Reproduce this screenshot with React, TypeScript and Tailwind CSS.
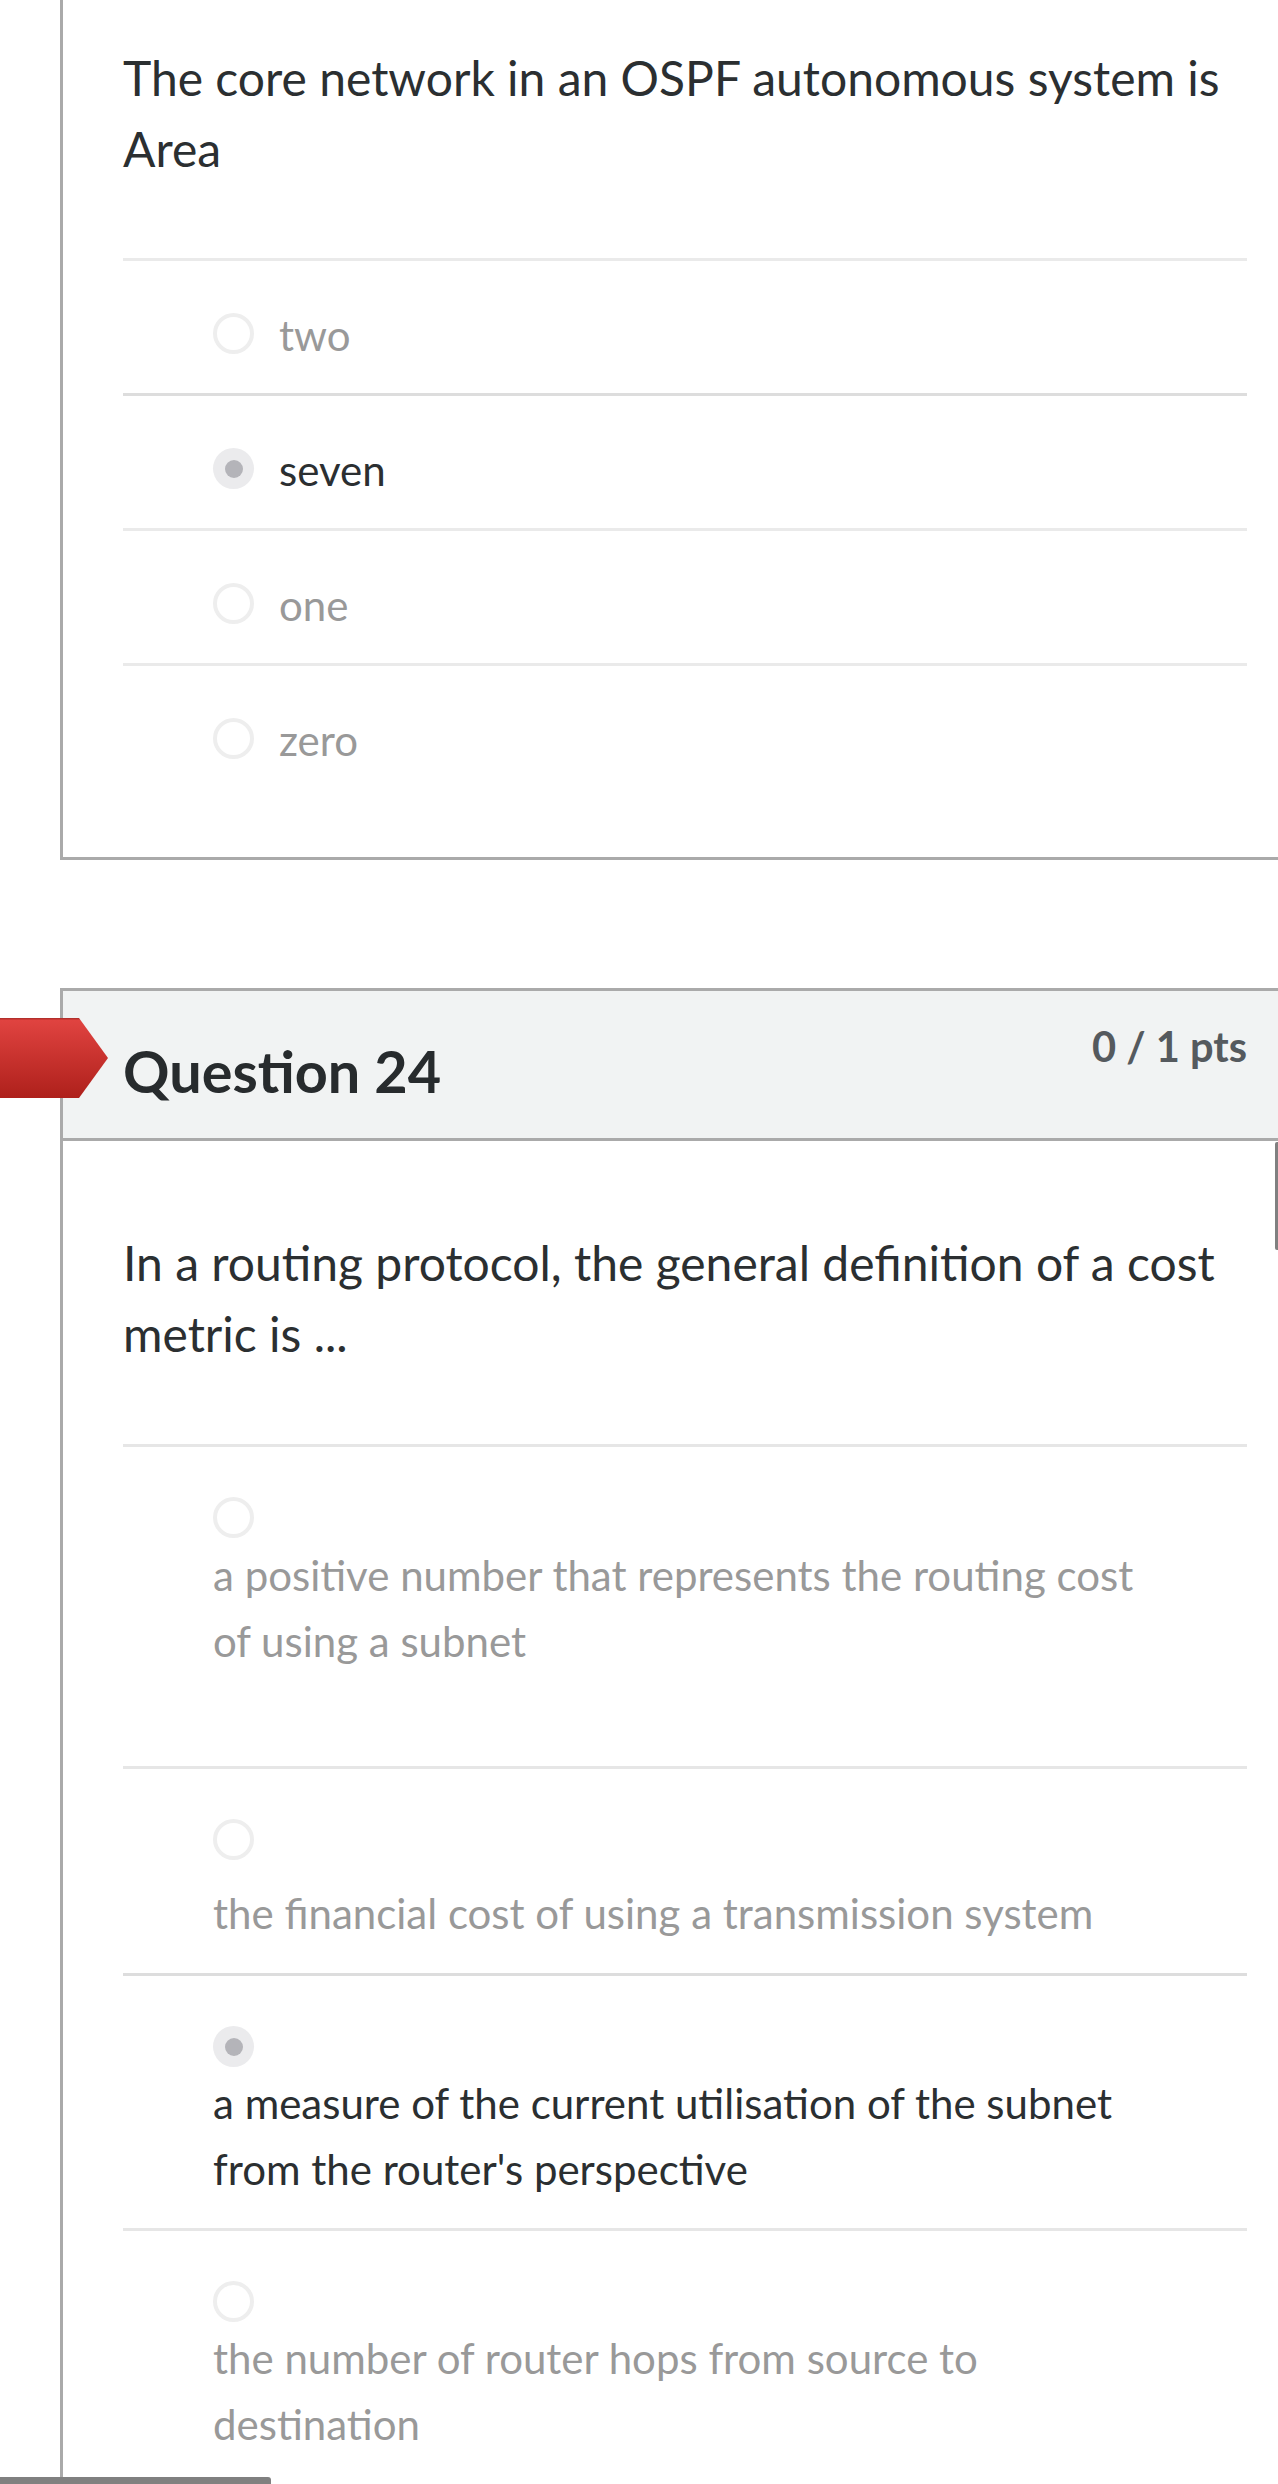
const lato = "font-['Lato',sans-serif]";

function Radio({ selected = false }: { selected?: boolean }) {
  if (selected) {
    return (
      <div className="flex h-[41px] w-[41px] shrink-0 items-center justify-center rounded-full bg-[#ebebed]">
        <div className="h-[18px] w-[18px] rounded-full bg-[#b4b4b9]" />
      </div>
    );
  }
  return <div className="h-[41px] w-[41px] shrink-0 rounded-full border-[4px] border-[#eeeeee] bg-white" />;
}

function InlineOption({ text, selected = false, line = "border-[#eaeaea]" }: { text: string; selected?: boolean; line?: string }) {
  return (
    <div className={`flex h-[135px] items-start gap-[25px] border-t-[3px] ${line} pt-[52px] pl-[90px]`}>
      <Radio selected={selected} />
      <span className={`-mt-[1px] text-[42px] leading-[46px] ${selected ? "text-[#2b2f31]" : "text-[#999999]"}`}>{text}</span>
    </div>
  );
}

function BlockOption({ lines, selected = false, height, gap, line = "border-[#e6e6e6]" }: { lines: string[]; selected?: boolean; height: string; gap: string; line?: string }) {
  return (
    <div className={`border-t-[3px] ${line} pl-[90px] pt-[50px] ${height}`}>
      <Radio selected={selected} />
      <div className={`${gap} text-[42px] leading-[66px] ${selected ? "text-[#2b2f31]" : "text-[#999999]"}`}>
        {lines.map((l) => (
          <div key={l}>{l}</div>
        ))}
      </div>
    </div>
  );
}

export default function App() {
  return (
    <div className={`relative h-[2484px] w-[1278px] overflow-hidden bg-white ${lato}`}>
      <div className="ml-[60px] h-[860px] border-b-[3px] border-l-[3px] border-[#aaaaaa] pl-[60px] pr-[31px] pt-[42px]">
        <p className="h-[216px] text-[48px] leading-[71px] text-[#2b2f31]">
          The core network in an OSPF autonomous system is
          <br />
          Area
        </p>
        <InlineOption text="two" />
        <InlineOption text="seven" selected line="border-[#dddddd]" />
        <InlineOption text="one" />
        <InlineOption text="zero" />
      </div>

      <div className="ml-[60px] mt-[128px] flex h-[153px] items-start justify-between border-y-[3px] border-l-[3px] border-[#aaaaaa] bg-[#f1f3f3] pl-[60px] pr-[31px]">
        <h2 className="mt-[45px] text-[57.6px] font-bold leading-[70px] text-[#272b2d]">Question 24</h2>
        <span className="mt-[31px] text-[41.6px] font-bold leading-[48px] text-[#555a5e]">0 / 1 pts</span>
      </div>

      <div className="ml-[60px] border-l-[3px] border-[#aaaaaa] pl-[60px] pr-[31px] pt-[86px]">
        <p className="h-[217px] text-[48px] leading-[71px] text-[#2b2f31]">
          In a routing protocol, the general definition of a cost
          <br />
          metric is ...
        </p>
        <BlockOption height="h-[322px]" gap="mt-[4px]" lines={["a positive number that represents the routing cost", "of using a subnet"]} />
        <BlockOption height="h-[207px]" gap="mt-[20px]" lines={["the financial cost of using a transmission system"]} />
        <BlockOption height="h-[255px]" gap="mt-[3px]" selected line="border-[#dddddd]" lines={["a measure of the current utilisation of the subnet", "from the router's perspective"]} />
        <BlockOption height="h-[260px]" gap="mt-[3px]" lines={["the number of router hops from source to", "destination"]} />
      </div>

      {/* red arrow marking the wrong answer */}
      <svg className="absolute left-0 top-[1018px]" width="109" height="80" viewBox="0 0 109 80">
        <defs>
          <linearGradient id="flag" x1="0" y1="0" x2="0" y2="1">
            <stop offset="0" stopColor="#a82a26" />
            <stop offset="0.03" stopColor="#e04340" />
            <stop offset="1" stopColor="#ae201b" />
          </linearGradient>
        </defs>
        <path d="M0 0H79L108 40L79 80H0Z" fill="url(#flag)" />
      </svg>

      {/* mobile overlay scrollbars */}
      <div className="absolute right-0 top-[1142px] h-[108px] w-[3px] rounded-l-[2px] bg-[#808080]" />
      <div className="absolute bottom-0 left-0 h-[7px] w-[271px] rounded-tr-[3px] bg-[#808080]" />
    </div>
  );
}
